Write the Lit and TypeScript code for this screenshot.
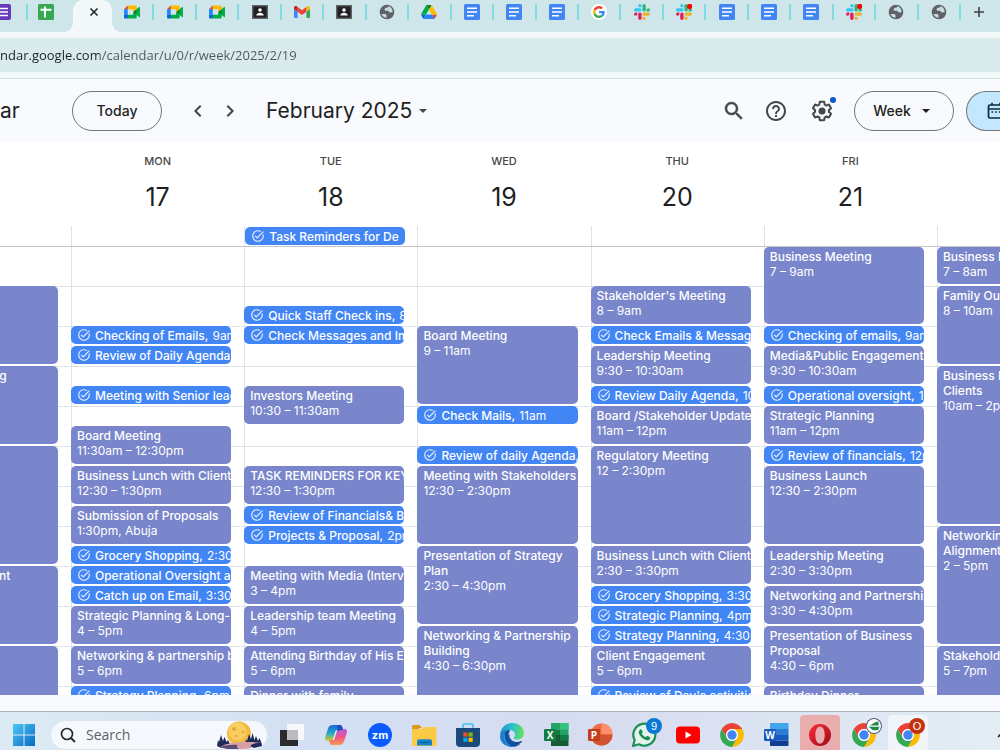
import { LitElement, html, svg, css, TemplateResult } from "lit";
import { customElement, property } from "lit/decorators.js";
import { classMap } from "lit/directives/class-map.js";
import { styleMap } from "lit/directives/style-map.js";

/* ---------- icons ---------- */

const icon = (size: number, box: string, body: unknown) =>
  html`<svg width=${size} height=${size} viewBox=${box} aria-hidden="true">${body}</svg>`;

const chromeBlade =
  "M4.95 13A22 22 0 0 1 43.05 13L24 13A11 11 0 0 0 14.47 29.5Z";
const slackArm =
  "M5.042 15.165a2.528 2.528 0 0 1-2.52 2.523A2.528 2.528 0 0 1 0 15.165a2.527 2.527 0 0 1 2.522-2.52h2.52v2.52zM6.313 15.165a2.527 2.527 0 0 1 2.521-2.52 2.527 2.527 0 0 1 2.521 2.52v6.313A2.528 2.528 0 0 1 8.834 24a2.528 2.528 0 0 1-2.521-2.522v-6.313z";

const slackMark = svg`
  <path d=${slackArm} fill="#e01e5a"/>
  <path d=${slackArm} fill="#36c5f0" transform="rotate(90 12 12)"/>
  <path d=${slackArm} fill="#2eb67d" transform="rotate(180 12 12)"/>
  <path d=${slackArm} fill="#ecb22e" transform="rotate(270 12 12)"/>`;

const favicons: Record<string, TemplateResult> = {
  forms: icon(16, "0 0 16 16", svg`<rect width="16" height="16" rx="2" fill="#673ab7"/><path d="M3 4.500h10M3 8h10M3 11.500h10" stroke="#fff" stroke-width="1.600"/>`),
  sheets: icon(16, "0 0 16 16", svg`<rect width="16" height="16" rx="1.5" fill="#34a853"/><path d="M2.5 5.8h11M7 2.5v11" stroke="#fff" stroke-width="1.9"/>`),
  meet: icon(16, "0 -8 87.5 88", svg`
    <path fill="#00832d" d="M49.5 36l8.53 9.75 11.47 7.33 2-17.02-2-16.64-11.69 6.44z"/>
    <path fill="#0066da" d="M0 51.5V66c0 3.315 2.685 6 6 6h14.5l3-10.96-3-9.54-9.95-3z"/>
    <path fill="#e94235" d="M20.5 0L0 20.5l10.55 3 9.95-3 2.95-9.41z"/>
    <path fill="#2684fc" d="M20.5 20.5H0v31h20.5z"/>
    <path fill="#00ac47" d="M82.6 8.68L69.5 19.42v33.66l13.16 10.79c1.97 1.54 4.85.135 4.85-2.37V11c0-2.535-2.945-3.925-4.91-2.32zM49.5 36v15.5h-29V72h43c3.315 0 6-2.685 6-6V53.08z"/>
    <path fill="#ffba00" d="M63.5 0h-43v20.5h29V36l20-16.57V6c0-3.315-2.685-6-6-6z"/>`),
  contact: icon(16, "0 0 16 16", svg`<rect x=".7" y="1.7" width="14.6" height="12.6" fill="#202124" stroke="#5f6368" stroke-width="1.4"/><circle cx="8" cy="6" r="1.8" fill="#fff"/><path d="M4.3 11.4c0-3.4 7.4-3.4 7.4 0z" fill="#fff"/>`),
  gmail: icon(16, "52 31 88 88", svg`
    <path fill="#4285f4" d="M58 108h14V74L52 59v43c0 3.32 2.69 6 6 6"/>
    <path fill="#34a853" d="M120 108h14c3.32 0 6-2.69 6-6V59l-20 15"/>
    <path fill="#fbbc04" d="M120 48v26l20-15v-8c0-7.42-8.47-11.65-14.4-7.2"/>
    <path fill="#ea4335" d="M72 74V48l24 18 24-18v26L96 92"/>
    <path fill="#c5221f" d="M52 51v8l20 15V48l-5.6-4.2c-5.94-4.45-14.4-.22-14.4 7.2"/>`),
  globe: icon(16, "1 1 22 22", svg`<circle cx="12" cy="12" r="9.6" fill="#c9dde0"/><path fill="#5f6368" d="M12 2C6.48 2 2 6.48 2 12s4.48 10 10 10 10-4.48 10-10S17.52 2 12 2zm-.6 17.9c-3.1-.2-5.8-2.2-6.9-5.2h4.6c1.2 0 2.2.9 2.2 2.1zM19.9 11.4c-1 1.2-2.4 1.6-3.9 1.2-1.300-.4-1.600-1.800-2.900-2.200-1.300-.4-2.900.4-3.900-.6-1-1.100-.5-2.900.8-3.300 1.300-.3 2.400.2 3.200-.9.400-.6.300-1.100.200-1.600 3.600.500 6.200 3.600 6.500 7.400z" fill-rule="evenodd"/>`),
  drive: icon(16, "0 -5 87.3 88", svg`
    <path fill="#0066da" d="m6.6 66.85 3.85 6.65c.8 1.4 1.95 2.5 3.3 3.3l13.75-23.8h-27.5c0 1.55.4 3.1 1.2 4.5z"/>
    <path fill="#00ac47" d="m43.65 25-13.75-23.8c-1.35.8-2.5 1.9-3.3 3.3l-25.4 44a9.06 9.06 0 0 0-1.2 4.5h27.5z"/>
    <path fill="#ea4335" d="m73.55 76.8c1.35-.8 2.5-1.9 3.3-3.3l1.6-2.75 7.65-13.25c.8-1.4 1.2-2.95 1.2-4.5h-27.502l5.852 11.5z"/>
    <path fill="#00832d" d="m43.65 25 13.75-23.8c-1.35-.8-2.9-1.2-4.5-1.2h-18.5c-1.6 0-3.15.45-4.5 1.2z"/>
    <path fill="#2684fc" d="m59.8 53h-32.3l-13.75 23.8c1.35.8 2.9 1.2 4.5 1.2h50.8c1.6 0 3.15-.45 4.5-1.2z"/>
    <path fill="#ffba00" d="m73.4 26.5-12.7-22c-.8-1.4-1.95-2.5-3.3-3.3l-13.75 23.8 16.15 28h27.45c0-1.55-.4-3.1-1.2-4.5z"/>`),
  docs: icon(16, "0 0 16 16", svg`<rect width="16" height="16" rx="1.5" fill="#4285f4"/><path d="M3 4.2h10M3 8h10M3 11.700h7" stroke="#fff" stroke-width="1.600"/>`),
  google: icon(16, "0 0 16 16", svg`<circle cx="8" cy="8" r="8" fill="#fff"/><g transform="translate(2 2) scale(.25)">
    <path fill="#ea4335" d="M24 9.500c3.540 0 6.710 1.220 9.210 3.600l6.850-6.850C35.900 2.380 30.470 0 24 0 14.620 0 6.510 5.380 2.560 13.220l7.980 6.190C12.430 13.720 17.740 9.500 24 9.500z"/>
    <path fill="#4285f4" d="M46.980 24.550c0-1.570-.15-3.090-.38-4.550H24v9.020h12.940c-.58 2.960-2.260 5.480-4.780 7.180l7.730 6c4.510-4.180 7.090-10.360 7.090-17.650z"/>
    <path fill="#fbbc05" d="M10.530 28.590c-.48-1.450-.76-2.990-.76-4.590s.27-3.140.76-4.590l-7.980-6.190C.920 16.460 0 20.120 0 24c0 3.880.920 7.540 2.560 10.780l7.970-6.190z"/>
    <path fill="#34a853" d="M24 48c6.480 0 11.930-2.130 15.890-5.810l-7.730-6c-2.150 1.450-4.920 2.300-8.160 2.300-6.260 0-11.570-4.220-13.470-9.910l-7.980 6.190C6.510 42.620 14.620 48 24 48z"/></g>`),
  slack: icon(16, "0 0 24 24", slackMark),
  slackDot: icon(16, "0 0 24 24", svg`${slackMark}<circle cx="20.500" cy="3.800" r="4" fill="#ff0000"/>`),
};

const closeIcon = icon(10, "0 0 10 10", svg`<path d="M1.500 1.500l7 7M8.500 1.500l-7 7" stroke="#1f2a2c" stroke-width="1.600"/>`);
const plusIcon = icon(12, "0 0 12 12", svg`<path d="M6 1v10M1 6h10" stroke="#3c4648" stroke-width="1.600"/>`);
const prevIcon = icon(24, "0 0 24 24", svg`<path d="M14.700 6.700L9.400 12l5.300 5.300" fill="none" stroke="#444746" stroke-width="2"/>`);
const nextIcon = icon(24, "0 0 24 24", svg`<path d="M9.300 6.700l5.300 5.300-5.300 5.300" fill="none" stroke="#444746" stroke-width="2"/>`);
const caret = (color: string) => icon(10, "0 0 10 10", svg`<path d="M1 3h8L5 7z" fill=${color}/>`);
const searchIcon = icon(24, "0 0 24 24", svg`<path fill="#444746" stroke="#444746" stroke-width=".4" d="M15.500 14h-.79l-.28-.27C15.410 12.590 16 11.110 16 9.500 16 5.910 13.090 3 9.500 3S3 5.910 3 9.500 5.910 16 9.500 16c1.610 0 3.090-.59 4.230-1.570l.27.28v.79l5 4.990L20.490 19l-4.990-5zm-6 0C7.010 14 5 11.990 5 9.500S7.010 5 9.500 5 14 7.010 14 9.500 11.990 14 9.500 14z"/>`);
const helpIcon = icon(24, "0 0 24 24", svg`<path fill="#444746" d="M11 18h2v-2h-2v2zm1-16C6.480 2 2 6.480 2 12s4.480 10 10 10 10-4.480 10-10S17.520 2 12 2zm0 18c-4.410 0-8-3.590-8-8s3.590-8 8-8 8 3.590 8 8-3.590 8-8 8zm0-14c-2.210 0-4 1.790-4 4h2c0-1.100.9-2 2-2s2 .9 2 2c0 2-3 1.750-3 5h2c0-2.250 3-2.500 3-5 0-2.210-1.790-4-4-4z"/>`);
const gearIcon = icon(24, "0 0 24 24", svg`<path fill="#444746" d="M13.850 22.250h-3.700c-.74 0-1.360-.54-1.450-1.270l-.27-1.890c-.27-.14-.53-.29-.79-.46l-1.800.72c-.7.26-1.470-.03-1.810-.65L2.200 15.530c-.35-.66-.2-1.440.36-1.880l1.530-1.190c-.01-.15-.02-.3-.02-.46 0-.15.01-.31.02-.46l-1.520-1.190c-.59-.45-.74-1.260-.37-1.880l1.850-3.190c.34-.62 1.110-.9 1.790-.63l1.810.73c.26-.17.52-.32.78-.46l.27-1.910c.09-.7.71-1.250 1.440-1.250h3.700c.74 0 1.360.54 1.450 1.270l.27 1.890c.27.14.53.29.79.46l1.800-.72c.71-.26 1.480.03 1.820.65l1.840 3.180c.36.66.2 1.440-.36 1.880l-1.520 1.190c.01.15.02.3.02.46s-.01.31-.02.46l1.520 1.190c.56.45.72 1.230.37 1.860l-1.860 3.220c-.34.62-1.110.9-1.800.63l-1.800-.72c-.26.17-.52.32-.78.46l-.27 1.910c-.1.68-.72 1.220-1.460 1.220zm-3.230-2h2.760l.37-2.550.53-.22c.44-.18.88-.44 1.340-.78l.45-.34 2.380.96 1.380-2.400-2.030-1.580.07-.56c.03-.26.06-.51.06-.78s-.03-.53-.06-.78l-.07-.56 2.030-1.580-1.390-2.400-2.390.96-.45-.35c-.42-.32-.87-.58-1.330-.77l-.52-.22-.37-2.550h-2.760l-.37 2.550-.53.21c-.44.19-.88.44-1.340.79l-.45.33-2.380-.95-1.390 2.390 2.030 1.580-.07.56a7 7 0 0 0-.06.79c0 .26.02.53.06.78l.07.56-2.030 1.580 1.380 2.400 2.390-.96.45.35c.43.33.86.58 1.330.77l.53.22.38 2.550z"/><circle cx="12" cy="12" r="3.500" fill="#444746"/>`);
const calendarIcon = icon(20, "0 0 20 20", svg`<g fill="none" stroke="#0b2a3d" stroke-width="1.700"><rect x="2.500" y="4" width="15" height="13" rx="1.500"/><path d="M2.500 8h15M6 1.800V4M14 1.800V4"/></g><path d="M5.500 11h1.700M9.200 11h1.700M12.900 11h1.700" stroke="#0b2a3d" stroke-width="1.700"/>`);
const taskIcon = icon(14, "0 0 24 24", svg`<path fill="#e3edfe" d="M22 5.180L10.590 16.600l-4.240-4.240 1.410-1.410 2.830 2.830 10-10L22 5.180zM19.790 10.220C19.920 10.790 20 11.390 20 12c0 4.420-3.580 8-8 8s-8-3.580-8-8 3.580-8 8-8c1.580 0 3.040.46 4.280 1.250l1.440-1.440C16.100 2.670 14.130 2 12 2 6.480 2 2 6.480 2 12s4.480 10 10 10 10-4.480 10-10c0-1.190-.22-2.330-.6-3.390l-1.610 1.610z"/>`);

const chromeMark = svg`
  <path d=${chromeBlade} fill="#ea4335"/>
  <path d=${chromeBlade} fill="#fbbc04" transform="rotate(120 24 24)"/>
  <path d=${chromeBlade} fill="#34a853" transform="rotate(240 24 24)"/>
  <circle cx="24" cy="24" r="11" fill="#fff"/><circle cx="24" cy="24" r="8.700" fill="#4285f4"/>`;

const office = (letter: string, body: unknown, plate: string) => icon(26, "0 0 26 26", svg`
  ${body}<rect x="1" y="7" width="12" height="12" rx="1.200" fill=${plate}/>
  <text x="7" y="16.500" text-anchor="middle" font-family="Open Sans, sans-serif" font-weight="700" font-size="10" fill="#fff">${letter}</text>`);

const apps: Record<string, TemplateResult> = {
  start: icon(24, "0 0 24 24", svg`<defs><linearGradient id="win" x1="0" y1="0" x2="1" y2="1"><stop offset="0" stop-color="#4cc8f5"/><stop offset="1" stop-color="#0669c4"/></linearGradient></defs><path fill="url(#win)" d="M1 1h10.500v10.500H1zM12.500 1H23v10.500H12.500zM1 12.500h10.500V23H1zM12.500 12.500H23V23H12.500z"/>`),
  taskView: icon(24, "0 0 24 24", svg`<path d="M0 7h18v16H0z" fill="#2b2b2d"/><path d="M7 1h17v16H7z" fill="#fafafb" opacity=".92"/><path d="M7 7h11v10H7z" fill="#bcbcbe"/>`),
  copilot: icon(24, "0 0 24 24", svg`<defs><linearGradient id="cpa" x1="0" y1="0" x2="0" y2="1"><stop offset="0" stop-color="#1b63d8"/><stop offset=".5" stop-color="#22a8c8"/><stop offset="1" stop-color="#d8cf2c"/></linearGradient><linearGradient id="cpb" x1="0" y1="0" x2="0" y2="1"><stop offset="0" stop-color="#b05be0"/><stop offset=".5" stop-color="#f0568a"/><stop offset="1" stop-color="#fb9a4b"/></linearGradient></defs>
    <path d="M9.500 2h6.200c1.500 0 2.100.9 2.500 2.100L19 7h-2.200c-1.700 0-2.500.8-3 2.300l-2.100 6.300c-.5 1.600-1.500 2.400-3.200 2.400H3.600C1.300 18 .5 16.400 1.200 14L4 5.500C4.800 3.100 6.600 2 9.500 2z" fill="url(#cpa)"/>
    <path d="M14.500 22H8.300c-1.500 0-2.100-.9-2.500-2.100L5 17h2.500c1.700 0 2.500-.8 3-2.300l2-6.300c.5-1.600 1.500-2.400 3.200-2.400h4.700c2.300 0 3.100 1.600 2.400 4L20 18.500c-.8 2.400-2.600 3.500-5.500 3.500z" fill="url(#cpb)"/>
    <path d="M13 2h2.700c1.500 0 2.100.9 2.500 2.100L19 7h-2.200c-1.700 0-2.500.8-3 2.300z" fill="#1d4fc0"/>
    <path d="M12.800 8.500L10 17H8.700l2.600-8.300c.3-.9.800-1.500 1.500-2z" fill="#e8f0fa"/>`),
  zoom: icon(24, "0 0 24 24", svg`<circle cx="12" cy="12" r="12" fill="#0b5cff"/><text x="12" y="15.500" text-anchor="middle" font-family="Inter, sans-serif" font-weight="700" font-size="11" fill="#fff">zm</text>`),
  folder: icon(26, "0 0 26 26", svg`<path d="M1 4.500C1 3.500 1.600 3 2.500 3h6l2.500 3h-3v3H1z" fill="#d99a16"/><path d="M1 7h10l2-2h11c.9 0 1.500.6 1.500 1.500v16c0 .9-.6 1.500-1.500 1.500H1z" fill="#fccb46"/><path d="M6 23.500v-4c0-1.400.9-2.300 2.300-2.300h10.400c1.400 0 2.300.9 2.300 2.300v4z" fill="#1583c9"/><path d="M9 20.500h9" stroke="#0a5f9c" stroke-width="1.200"/>`),
  store: icon(24, "0 0 24 24", svg`<path d="M7 5V2.300C7 1.500 7.500 1 8.300 1h7.400c.8 0 1.300.5 1.300 1.300V5" fill="none" stroke="#3cc3f2" stroke-width="1.700"/><path d="M0 5h24v15c0 2.500-1.500 4-4 4H4c-2.500 0-4-1.500-4-4z" fill="#1b4a7a"/><path d="M7.300 9.500h4.200v4.200H7.300z" fill="#f25022"/><path d="M12.500 9.500h4.200v4.200h-4.200z" fill="#7fba00"/><path d="M7.300 14.700h4.200v4.200H7.300z" fill="#00a4ef"/><path d="M12.500 14.700h4.200v4.200h-4.200z" fill="#ffb900"/>`),
  edge: icon(24, "0 0 24 24", svg`<defs><linearGradient id="eda" x1="0" y1=".3" x2="1" y2=".4"><stop offset="0" stop-color="#1c95d8"/><stop offset=".5" stop-color="#2dc0c9"/><stop offset="1" stop-color="#66e35a"/></linearGradient><linearGradient id="edb" x1="0" y1="0" x2="1" y2="1"><stop offset="0" stop-color="#1668b8"/><stop offset="1" stop-color="#0c3f8a"/></linearGradient></defs>
    <path d="M.2 10.500C1 4.500 6 0 12.200 0 19 0 24 4.800 24 10.200c0 3.800-2.900 6.300-6.300 6.300-2.400 0-3.900-.8-3.900-1.800 0-.7 1.200-1 1.200-3C15 9 12.500 7 9.300 7 5 7 1.500 9.300.2 13z" fill="url(#eda)"/>
    <path d="M.1 13C.600 9 4.200 6.500 8.500 6.700c-3 1.500-4.500 4-4.200 7.300.4 4.500 4.200 8.300 9.500 9.800C6.500 24.800-.5 20 .1 13z" fill="#1b7fd2"/>
    <path d="M9.400 10.800c-2.800 1.500-3.400 5.200-1.200 8.300 2.800 3.900 8.800 4.800 13.800-.3.400-.5 0-1-.6-.7-6 2.600-12.700-.5-12-7.300z" fill="url(#edb)"/>
    <path d="M8.200 7c-4.700 1.800-4.700 7.500-2 11.500 1.900 2.900 4.800 5 7.600 5.300 2.600-.1 5-1.300 6.800-3-5.500 2.400-11.200.3-12.400-4.600-.9-3.800.7-6.500 2-8.900z" fill="#104f9e"/>`),
  excel: office("X", svg`<path d="M8 1h16.500c.5 0 1 .5 1 1v5.500H8z" fill="#21a366"/><path d="M17 1h8.500v6.500H17z" fill="#33c481"/><path d="M8 7.500h9v5.500H8z" fill="#107c41"/><path d="M17 7.500h8.500v5.500H17z" fill="#21a366"/><path d="M8 13h17.500v11H8z" fill="#185c37"/><path d="M17 13h8.500v5.500H17z" fill="#107c41"/>`, "#107c41"),
  powerpoint: office("P", svg`<circle cx="14.500" cy="12.500" r="11" fill="#ed6c47"/><path d="M14.500 1.500a11 11 0 0 1 11 11h-11z" fill="#ff8f6b"/><path d="M3.500 12.500h22a11 11 0 0 1-22 0z" fill="#d35230"/>`, "#c43e1c"),
  whatsapp: icon(26, "0 0 26 26", svg`<path d="M2 24l1.700-6A11 11 0 1 1 8 22.300z" fill="#e6f3ec" stroke="#1a8f57" stroke-width="2.200" stroke-linejoin="round"/><path d="M9.300 7.500c.5-.4 1.200-.3 1.500.3l.9 1.900c.1.400 0 .8-.3 1.100l-.7.800c.9 1.700 2.200 2.900 4 3.700l1-1.100c.3-.3.700-.4 1.100-.2l1.900.9c.5.3.6.8.5 1.300-.6 1.900-2.400 2.400-4.400 1.700-3.400-1.200-5.900-3.600-6.900-6.700-.4-1.400.2-2.800 1.400-3.700z" fill="#1a8f57"/>`),
  youtube: icon(26, "0 0 26 26", svg`<rect x="1" y="4.500" width="24" height="17" rx="4" fill="#f00"/><path d="M10.500 9.500v7l6-3.500z" fill="#fff"/>`),
  chrome: icon(26, "0 0 48 48", chromeMark),
  word: office("W", svg`<path d="M7 2c0-.6.400-1 1-1h16.500c.6 0 1 .4 1 1v5H7z" fill="#41a5ee"/><path d="M7 7h18.500v6H7z" fill="#2b7cd3"/><path d="M7 13h18.500v5.500H7z" fill="#185abd"/><path d="M7 18.500h18.500V23c0 .6-.4 1-1 1H8c-.6 0-1-.4-1-1z" fill="#103f91"/>`, "#185abd"),
  opera: icon(24, "0 0 24 24", svg`<defs><linearGradient id="opa" x1="0" y1="0" x2="1" y2="1"><stop offset="0" stop-color="#ff2a3c"/><stop offset="1" stop-color="#9c0a16"/></linearGradient></defs><path fill-rule="evenodd" fill="url(#opa)" d="M12 1a11 11 0 1 0 0 22 11 11 0 0 0 0-22zm0 2.400c3 0 4.700 3.800 4.700 8.600s-1.700 8.600-4.700 8.600S7.300 16.800 7.300 12 9 3.400 12 3.400z"/>`),
};

const moonArt = html`<svg width="46" height="28" viewBox="0 0 46 28" aria-hidden="true">
  <circle cx="22" cy="12.500" r="12" fill="#f4b942"/><circle cx="20.500" cy="10.500" r="9" fill="#fbd267" opacity=".8"/>
  <circle cx="17" cy="8" r="2" fill="#e6a93c"/><circle cx="26" cy="11" r="1.500" fill="#e6a93c"/><circle cx="19" cy="15" r="1.300" fill="#e6a93c"/>
  <path d="M0 25l1-6 1 2 2-7 2 6 1.500-4 2 5 1.500-2 2 4 7 1-8 3H4zM28 23l1-5 1 2 2-7 2 5 1.500-6 2 7 1.500-4 2 5 1.500-3 2 5 .5 3-8 2z" fill="#1e2a5a"/>
  <path d="M3 26c9-5 20-5.500 42-4.500-9 .5-14 3-10 5.500-8 1.500-26 1.500-32-1z" fill="#d7a0a6"/>
  <path d="M3 26c6-2 12-2.500 18-2-2 1-1 3 1 4-7 .500-15 0-19-2z" fill="#5a4a78"/></svg>`;

/* ---------- data ---------- */

interface Entry {
  start: number;
  end: number;
  title: string;
  time?: string;
  task?: boolean;
}

const ev = (start: number, end: number, title: string, time = ""): Entry => ({ start, end, title, time });
const task = (start: number, title: string, time = ""): Entry => ({ start, end: start + 0.5, title, time, task: true });

interface Day {
  name: string;
  date: string;
  edge?: "left" | "right";
  allDay?: string;
  entries: Entry[];
}

const week: Day[] = [
  { name: "", date: "", edge: "left", entries: [
    ev(8, 10, ""), ev(10, 12, "ng"), ev(12, 15, ""), ev(15, 17, "ent"), ev(17, 19, ""),
  ] },
  { name: "Mon", date: "17", entries: [
    task(9, "Checking of Emails,", "9am"),
    task(9.5, "Review of Daily Agenda,", "9:30am"),
    task(10.5, "Meeting with Senior leaders"),
    ev(11.5, 12.5, "Board Meeting", "11:30am – 12:30pm"),
    ev(12.5, 13.5, "Business Lunch with Clients", "12:30 – 1:30pm"),
    ev(13.5, 14.5, "Submission of Proposals", "1:30pm, Abuja"),
    task(14.5, "Grocery Shopping,", "2:30pm"),
    task(15, "Operational Oversight and"),
    task(15.5, "Catch up on Email,", "3:30pm"),
    ev(16, 17, "Strategic Planning & Long-", "4 – 5pm"),
    ev(17, 18, "Networking & partnership b", "5 – 6pm"),
    task(18, "Strategy Planning,", "6pm"),
  ] },
  { name: "Tue", date: "18", allDay: "Task Reminders for Dea", entries: [
    task(8.5, "Quick Staff Check ins,", "8:30am"),
    task(9, "Check Messages and Im"),
    ev(10.5, 11.5, "Investors Meeting", "10:30 – 11:30am"),
    ev(12.5, 13.5, "TASK REMINDERS FOR KEY", "12:30 – 1:30pm"),
    task(13.5, "Review of Financials& B"),
    task(14, "Projects & Proposal,", "2pm"),
    ev(15, 16, "Meeting with Media (Interv", "3 – 4pm"),
    ev(16, 17, "Leadership team Meeting", "4 – 5pm"),
    ev(17, 18, "Attending Birthday of His E", "5 – 6pm"),
    ev(18, 19, "Dinner with family"),
  ] },
  { name: "Wed", date: "19", entries: [
    ev(9, 11, "Board Meeting", "9 – 11am"),
    task(11, "Check Mails,", "11am"),
    task(12, "Review of daily Agenda,"),
    ev(12.5, 14.5, "Meeting with Stakeholders", "12:30 – 2:30pm"),
    ev(14.5, 16.5, "Presentation of Strategy Plan", "2:30 – 4:30pm"),
    ev(16.5, 18.5, "Networking & Partnership Building", "4:30 – 6:30pm"),
  ] },
  { name: "Thu", date: "20", entries: [
    ev(8, 9, "Stakeholder's Meeting", "8 – 9am"),
    task(9, "Check Emails & Messages"),
    ev(9.5, 10.5, "Leadership Meeting", "9:30 – 10:30am"),
    task(10.5, "Review Daily Agenda,", "10:30am"),
    ev(11, 12, "Board /Stakeholder Update", "11am – 12pm"),
    ev(12, 14.5, "Regulatory Meeting", "12 – 2:30pm"),
    ev(14.5, 15.5, "Business Lunch with Clients", "2:30 – 3:30pm"),
    task(15.5, "Grocery Shopping,", "3:30pm"),
    task(16, "Strategic Planning,", "4pm"),
    task(16.5, "Strategy Planning,", "4:30pm"),
    ev(17, 18, "Client Engagement", "5 – 6pm"),
    task(18, "Review of Day's activities"),
  ] },
  { name: "Fri", date: "21", entries: [
    ev(7, 9, "Business Meeting", "7 – 9am"),
    task(9, "Checking of emails,", "9am"),
    ev(9.5, 10.5, "Media&Public Engagement", "9:30 – 10:30am"),
    task(10.5, "Operational oversight,", "10:30am"),
    ev(11, 12, "Strategic Planning", "11am – 12pm"),
    task(12, "Review of financials,", "12pm"),
    ev(12.5, 14.5, "Business Launch", "12:30 – 2:30pm"),
    ev(14.5, 15.5, "Leadership Meeting", "2:30 – 3:30pm"),
    ev(15.5, 16.5, "Networking and Partnership", "3:30 – 4:30pm"),
    ev(16.5, 18, "Presentation of Business Proposal", "4:30 – 6pm"),
    ev(18, 19, "Birthday Dinner"),
  ] },
  { name: "", date: "", edge: "right", entries: [
    ev(7, 8, "Business Me", "7 – 8am"),
    ev(8, 10, "Family Out", "8 – 10am"),
    ev(10, 14, "Business Me\nClients", "10am – 2pm"),
    ev(14, 17, "Networking\nAlignment", "2 – 5pm"),
    ev(17, 19, "Stakeholde", "5 – 7pm"),
  ] },
];

const tabs = [
  "meet", "meet", "meet", "contact", "gmail", "contact", "globe", "drive", "docs", "docs",
  "docs", "google", "slack", "slackDot", "docs", "docs", "docs", "slackDot", "globe", "globe",
];

/* ---------- browser frame ---------- */

@customElement("browser-bar")
export class BrowserBar extends LitElement {
  static styles = css`
    :host { display: block; font-family: "Open Sans", sans-serif; }
    button { border: 0; padding: 0; background: none; display: flex; align-items: center; justify-content: center; }
    .strip { display: flex; height: 32px; background: #cee6ea; overflow: hidden; }
    .tab { flex: 1; height: 24px; display: flex; align-items: center; padding-right: 4px; }
    .tab button { flex: 1; height: 16px; }
    .tab::after { content: ""; width: 2px; height: 16px; background: #7edae3; margin-right: -4px; }
    .tab.first { flex: 0 0 28px; padding: 0; justify-content: flex-start; }
    .tab.first button { flex: 0 0 16px; margin: 0 15px 0 -5px; }
    .tab.first::after { margin: 0; }
    .tab.second { flex: 0 0 45px; padding: 0; }
    .tab.second button { padding-right: 9px; }
    .tab.second::after { display: none; }
    .active { flex: 0 0 39px; background: #f3f9f9; border-radius: 10px 10px 0 0; position: relative; padding-bottom: 8px; box-sizing: border-box; }
    .active::before, .active::after { content: ""; position: absolute; bottom: 0; width: 10px; height: 10px; }
    .active::before { right: 100%; background: radial-gradient(circle at 0 0, transparent 10px, #f3f9f9 10px); }
    .active::after { left: 100%; background: radial-gradient(circle at 100% 0, transparent 10px, #f3f9f9 10px); }
    .active button { width: 38px; height: 24px; padding-left: 4px; }
    .add { flex: 0 0 39px; height: 24px; padding-right: 4px; }
    .bar { background: #f3f9f9; padding: 6px 0; border-bottom: 1px solid #d8e2e5; }
    .field { background: #d9ebed; }
    .address {
      display: block; box-sizing: border-box; width: 100%; height: 34px; border: 0; padding: 0; outline: 0;
      font: 13px/34px "Open Sans", sans-serif; color: transparent;
      background: linear-gradient(90deg, #1b2325 99px, #4b585c 99px); -webkit-background-clip: text; background-clip: text;
    }
  `;
  render() {
    return html`
      <div class="strip">
        <div class="tab first"><button aria-label="Tab">${favicons.forms}</button></div>
        <div class="tab second"><button aria-label="Tab">${favicons.sheets}</button></div>
        <div class="active"><button aria-label="Close tab">${closeIcon}</button></div>
        ${tabs.map((t) => html`<div class="tab"><button aria-label="Tab">${favicons[t]}</button></div>`)}
        <button class="add" aria-label="New tab">${plusIcon}</button>
      </div>
      <div class="bar">
        <div class="field"><input class="address" aria-label="Address" value="ndar.google.com/calendar/u/0/r/week/2025/2/19" /></div>
      </div>`;
  }
}

/* ---------- calendar ---------- */

@customElement("calendar-entry")
export class CalendarEntry extends LitElement {
  @property({ attribute: false }) entry!: Entry;
  @property() edge = "";
  static styles = css`
    :host { display: block; min-width: 0; min-height: 0; }
    .card {
      box-sizing: border-box; width: 100%; height: 100%; display: flex; flex-direction: column;
      align-items: flex-start; justify-content: flex-start; text-align: left; overflow: hidden;
      border: 0; border-radius: 5px; padding: 2px 0 0 6px; margin: 0; background: #7986cb; color: #fff;
      font: 12px/15px Inter, sans-serif; white-space: nowrap;
    }
    .title { font-weight: 500; }
    .long .title { white-space: pre-line; }
    .card.task { background: #4285f4; flex-direction: row; align-items: center; gap: 4px; padding: 0 0 0 6px; }
    .task > * { flex: none; }
    .left { padding-left: 0; border-radius: 0 5px 5px 0; }
    .left .title { text-indent: -8px; }
    .right { border-radius: 5px 0 0 5px; }
    .right .title { white-space: pre; }
  `;
  render() {
    const e = this.entry;
    const classes = {
      card: true,
      task: !!e.task,
      long: e.end - e.start > 1,
      left: this.edge === "left",
      right: this.edge === "right",
    };
    return html`<button class=${classMap(classes)}>
      ${e.task ? taskIcon : ""}<span class="title">${e.title}</span>${e.time ? html`<span>${e.time}</span>` : ""}
    </button>`;
  }
}

@customElement("calendar-view")
export class CalendarView extends LitElement {
  static styles = css`
    :host {
      display: flex; flex-direction: column; min-height: 0; background: #f8fafd; color: #1f1f1f;
      font-family: Inter, sans-serif;
    }
    button { font: inherit; color: inherit; border: 0; padding: 0; background: none; display: flex; align-items: center; justify-content: center; }
    .toolbar { display: flex; align-items: center; height: 63px; flex: none; overflow: hidden; }
    .brand { width: 72px; font-size: 21px; line-height: 28px; flex: none; }
    .today, .view { height: 40px; border: 1px solid #747775; border-radius: 20px; font-size: 14px; font-weight: 500; }
    .today { width: 90px; margin-right: 20px; }
    .step { width: 32px; height: 32px; }
    .month { gap: 6px; margin: 0 auto 0 20px; font-size: 21px; line-height: 28px; }
    .tools { display: flex; align-items: center; flex: none; }
    .tool { width: 42px; height: 40px; position: relative; }
    .tool.settings { width: 50px; }
    .dot { position: absolute; right: 11px; top: 6px; width: 6px; height: 6px; border-radius: 50%; background: #0b57d0; }
    .view { width: 100px; gap: 10px; margin-left: 7px; margin-right: 12px; padding-right: 4px; }
    .toggle { width: 34px; height: 40px; box-sizing: border-box; border: 1px solid #747775; border-right: 0; border-radius: 20px 0 0 20px; background: #c2e7ff; padding-left: 19px; justify-content: flex-start; overflow: hidden; }
    .toggle svg { flex: none; }
    .columns { display: grid; grid-template-columns: 71px repeat(5, minmax(0, 1fr)) 63px; }
    .heads { background: #fff; flex: none; height: 84px; }
    .head { display: flex; flex-direction: column; align-items: center; padding-top: 11px; gap: 15px; }
    .name { font-size: 11px; line-height: 16px; font-weight: 500; color: #444746; text-transform: uppercase; }
    .date { font-size: 25px; line-height: 26px; }
    .allday { background: #fff; flex: none; height: 20px; border-bottom: 1px solid #c4c7c5; }
    .cell { border-left: 1px solid #dde3ea; padding: 1px 12px 1px 0; }
    .cell.left { border: 0; }
    .chip { box-sizing: border-box; height: 18px; width: 100%; background: #4285f4; color: #fff; border-radius: 5px; padding: 0 6px; gap: 4px; justify-content: flex-start; font-size: 12px; line-height: 15px; font-weight: 500; white-space: nowrap; overflow: hidden; }
    .chip svg { flex: none; }
    .chip span { overflow: hidden; }
    .hours {
      flex: 1; min-height: 0; overflow: hidden; background-color: #fff;
      background-image: linear-gradient(#dde3ea 1px, transparent 1px);
      background-size: 100% 40px; background-position: 0 39px;
      margin-bottom: 16px;
    }
    .day {
      display: grid; grid-template-rows: 19px repeat(23, 20px); padding-right: 13px;
      background: linear-gradient(90deg, #dde3ea 1px, transparent 1px);
    }
    .day.left { background: none; }
    .day.right { padding-right: 0; }
    .slot { margin-bottom: 2px; }
  `;
  render() {
    const row = (h: number) => Math.round((h - 7) * 2) + 1;
    return html`
      <div class="toolbar">
        <span class="brand">ar</span>
        <button class="today">Today</button>
        <button class="step" aria-label="Previous week">${prevIcon}</button>
        <button class="step" aria-label="Next week">${nextIcon}</button>
        <button class="month">February 2025 ${caret("#444746")}</button>
        <div class="tools">
          <button class="tool" aria-label="Search">${searchIcon}</button>
          <button class="tool" aria-label="Help">${helpIcon}</button>
          <button class="tool settings" aria-label="Settings">${gearIcon}<span class="dot"></span></button>
          <button class="view">Week ${caret("#1f1f1f")}</button>
          <button class="toggle" aria-label="Calendar">${calendarIcon}</button>
        </div>
      </div>
      <div class="columns heads">
        ${week.map((d) => html`<div class="head"><span class="name">${d.name}</span><span class="date">${d.date}</span></div>`)}
      </div>
      <div class="columns allday">
        ${week.map((d) => html`<div class=${classMap({ cell: true, left: d.edge === "left" })}>
          ${d.allDay ? html`<button class="chip">${taskIcon}<span>${d.allDay}</span></button>` : ""}</div>`)}
      </div>
      <div class="columns hours">
        ${week.map((d) => html`<div class=${classMap({ day: true, left: d.edge === "left", right: d.edge === "right" })}>
          ${d.entries.map((e) => html`<calendar-entry class="slot" .entry=${e} .edge=${d.edge ?? ""}
            style=${styleMap({ gridRow: `${row(e.start)} / ${row(e.end)}`, gridColumn: "1" })}></calendar-entry>`)}
        </div>`)}
      </div>`;
  }
}

/* ---------- taskbar ---------- */

@customElement("task-bar")
export class TaskBar extends LitElement {
  static styles = css`
    :host {
      display: flex; align-items: flex-start; gap: 4px; box-sizing: border-box; height: 39px; overflow: hidden;
      padding: 3px 0 0 4px; border-top: 1px solid #a9b4c0; font-family: "Open Sans", sans-serif;
      background: linear-gradient(90deg, #dcebf3, #d3e0f3 30%, #d6dcf0 55%, #dbe2f1 75%, #e2eef4);
    }
    button { flex: none; width: 40px; height: 40px; border: 0; padding: 0; background: none; border-radius: 4px; position: relative; display: flex; align-items: center; justify-content: center; }
    .search { display: flex; align-items: center; gap: 10px; box-sizing: border-box; width: 218px; height: 30px; margin: 5px 0 0 2px; padding: 0 4px 0 9px; border-radius: 15px; background: #f5f9fd; border: 1px solid #dbe4ee; flex: none; }
    .search input { flex: 1; min-width: 0; border: 0; padding: 0; background: none; font: 14px/20px "Open Sans", sans-serif; }
    .search input::placeholder { color: #5d6166; opacity: 1; }
    .opera { background: #e9adad; }
    .open { background: #f1f5fa; }
    .badge { position: absolute; right: 2px; top: 3px; width: 16px; height: 16px; border-radius: 50%; background: #0a78d4; color: #fff; font-size: 11px; line-height: 16px; text-align: center; }
    .badge.red { background: #c4320d; right: 3px; }
    .badge.leaf { background: #fff; box-shadow: inset 0 0 0 1px #5d5577; }
    .badge svg { display: block; }
    .tray { width: 3px; height: 40px; margin-left: auto; display: flex; align-items: center; overflow: hidden; }
    .tray svg { flex: none; }
  `;
  render() {
    return html`
      <button aria-label="Start">${apps.start}</button>
      <label class="search">
        ${icon(16, "0 0 16 16", svg`<circle cx="7" cy="7" r="5.500" fill="none" stroke="#26282b" stroke-width="1.700"/><path d="M11 11l4 4" stroke="#26282b" stroke-width="2"/>`)}
        <input type="search" aria-label="Search" placeholder="Search" />
        ${moonArt}
      </label>
      <button aria-label="Task view">${apps.taskView}</button>
      <button aria-label="Copilot">${apps.copilot}</button>
      <button aria-label="Zoom">${apps.zoom}</button>
      <button aria-label="File Explorer">${apps.folder}</button>
      <button aria-label="Store">${apps.store}</button>
      <button aria-label="Edge">${apps.edge}</button>
      <button aria-label="Excel">${apps.excel}</button>
      <button aria-label="PowerPoint">${apps.powerpoint}</button>
      <button aria-label="WhatsApp">${apps.whatsapp}<span class="badge">9</span></button>
      <button aria-label="YouTube">${apps.youtube}</button>
      <button aria-label="Chrome">${apps.chrome}</button>
      <button aria-label="Word">${apps.word}</button>
      <button class="opera" aria-label="Opera">${apps.opera}</button>
      <button aria-label="Chrome profile">${apps.chrome}<span class="badge leaf">${icon(16, "0 0 16 16", svg`<path d="M3 7.500C6 7 8 4 12.500 3.500V7.500zM2.500 8.700h11l-1.500 3.500H7z" fill="#1b8a4b"/>`)}</span></button>
      <button class="open" aria-label="Chrome profile O">${apps.chrome}<span class="badge red">O</span></button>
      <span class="tray">${icon(12, "0 0 12 12", svg`<path d="M1 8l5-5 5 5" fill="none" stroke="#222" stroke-width="1.600"/>`)}</span>`;
  }
}

@customElement("app-root")
export class AppRoot extends LitElement {
  static styles = css`
    :host { display: flex; flex-direction: column; height: 100vh; overflow: hidden; }
    browser-bar, task-bar { flex: none; }
    calendar-view { flex: 1; }
  `;
  render() {
    return html`<browser-bar></browser-bar><calendar-view></calendar-view><task-bar></task-bar>`;
  }
}
